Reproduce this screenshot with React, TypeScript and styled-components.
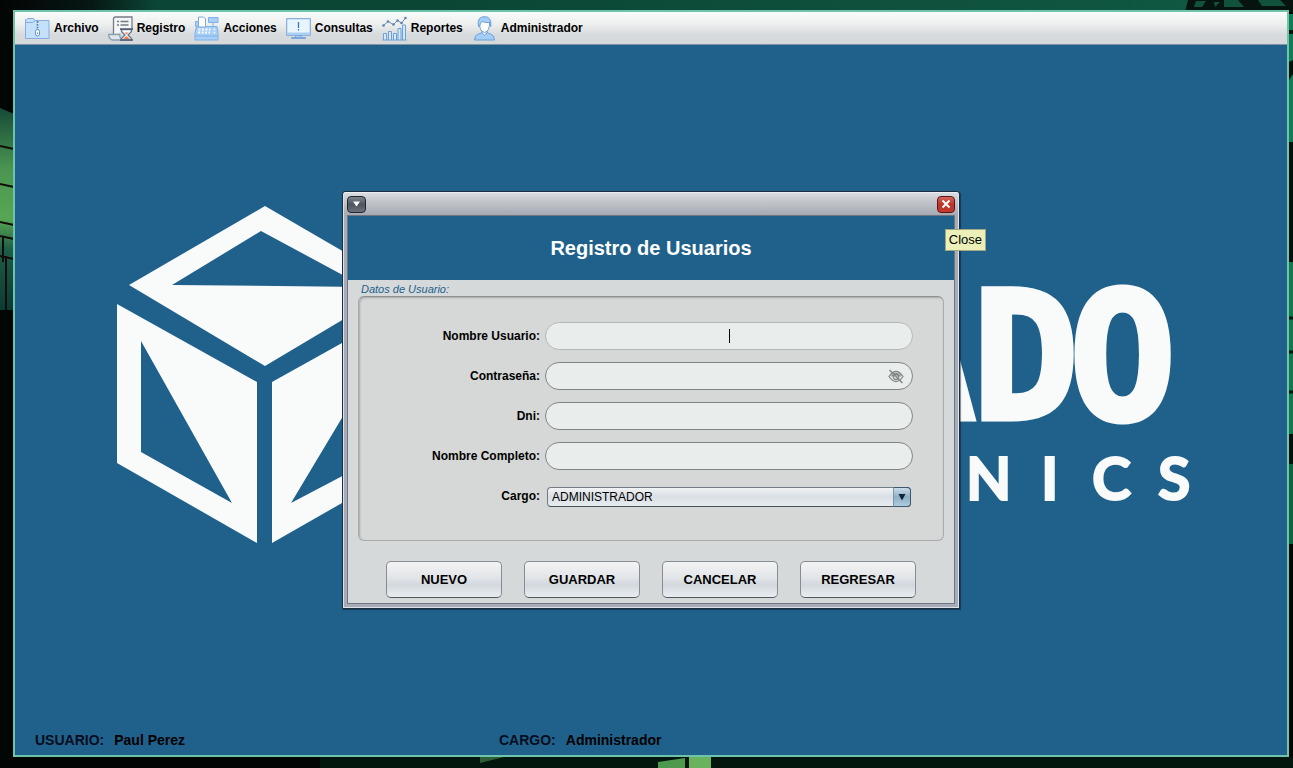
import React from "react";
import styled, { createGlobalStyle } from "styled-components";

const GlobalStyle = createGlobalStyle`
  *, *::before, *::after { box-sizing: border-box; }
  body {
    margin: 0;
    background: #020605;
    color: #000;
    font-family: "Liberation Sans", Arial, sans-serif;
    font-size: 12px;
  }
  button, input, select { font-family: inherit; }
`;

const Screen = styled.div`
  position: relative;
  display: flex;
  min-height: 100vh;
  padding: 10px 4px 11px 13px;
`;

const Wallpaper = styled.svg`
  position: absolute;
  inset: 0;
  width: 100%;
  height: 100%;
`;

const AppFrame = styled.div`
  position: relative;
  flex: 1;
  display: flex;
  flex-direction: column;
  border: 2px solid #6fc3ad;
  background: #20618c;
`;

const MenuBar = styled.nav`
  position: relative;
  display: flex;
  align-items: center;
  gap: 9px;
  height: 33px;
  padding: 0 10px;
  background: linear-gradient(#fafbfb 0%, #eceeee 40%, #d8dbde 70%, #d6d9da 100%);
  border-bottom: 1px solid #7f94a6;
`;

const MenuButton = styled.button`
  display: flex;
  align-items: center;
  gap: 4px;
  padding: 0;
  border: 0;
  background: none;
  color: #000;
  font-size: 12px;
  font-weight: 700;
  line-height: 16px;

  svg { width: 25px; height: 25px; }
`;

const Desktop = styled.main`
  position: relative;
  flex: 1;
  display: flex;
  flex-direction: column;
`;

const Brand = styled.svg`
  position: absolute;
  inset: 0;
  width: 100%;
  height: 100%;
`;

const Stage = styled.div`
  position: relative;
  flex: 1;
  display: flex;
  align-items: center;
  justify-content: center;
  padding-top: 30px;
`;

const StatusBar = styled.footer`
  position: relative;
  display: grid;
  grid-template-columns: 464px 1fr;
  height: 30px;
  padding: 6px 20px;
  font-size: 14px;
  font-weight: 700;
  line-height: 18px;
`;

const StatusItem = styled.div`
  display: flex;
  gap: 10px;
`;

const StatusLabel = styled.span`
  color: #050d1c;
`;

const Dialog = styled.section`
  position: relative;
  width: 618px;
  max-width: 100%;
  padding: 0 4px 4px;
  border: 1px solid #1c2e3e;
  border-radius: 3px 3px 0 0;
  background: #a7adb8;
  box-shadow: inset 1px 1px 0 #dfe3e8, inset -1px -1px 0 #dfe3e8, 1px 1px 1px rgba(0, 20, 40, 0.5);
`;

const TitleBar = styled.header`
  display: flex;
  align-items: center;
  justify-content: space-between;
  height: 23px;
  margin: 0 -3px;
  padding: 0 3px;
  border-radius: 2px 2px 0 0;
  background: linear-gradient(#d9dce0, #bfc3c9 45%, #a5aab3);
  border-top: 1px solid #eceef0;
`;

const WindowButton = styled.button<{ $danger?: boolean }>`
  display: flex;
  align-items: center;
  justify-content: center;
  width: ${(p) => (p.$danger ? 18 : 19)}px;
  height: 17px;
  padding: 0;
  border: 1px solid ${(p) => (p.$danger ? "#5d1512" : "#23262c")};
  border-radius: 4px;
  background: ${(p) =>
    p.$danger
      ? "linear-gradient(#d2665c, #bd3327 50%, #c23a2e)"
      : "linear-gradient(#7d838c, #4f555f 50%, #6b727d)"};
`;

const DialogBody = styled.div`
  border: 1px solid #70767f;
  background: #d6d9da;
  padding-bottom: 5px;
`;

const Banner = styled.h1`
  display: flex;
  align-items: center;
  justify-content: center;
  height: 64px;
  margin: 0;
  background: #20618c;
  color: #fff;
  font-size: 20px;
  font-weight: 700;
  line-height: 24px;
`;

const FieldGroup = styled.fieldset`
  min-width: 0;
  margin: 0 10px;
  padding: 0;
  border: 0;
`;

const Legend = styled.legend`
  padding: 3px 3px 0;
  color: #20618c;
  font-size: 11px;
  font-style: italic;
  line-height: 13px;
`;

const FieldPanel = styled.div`
  display: flex;
  flex-direction: column;
  gap: 12px;
  height: 245px;
  padding: 25px 30px 0 0;
  border: 1px solid #a9acad;
  border-top-color: #8c9091;
  border-radius: 6px;
  background: #d5d8d7;
  box-shadow: inset 1px 1px 2px rgba(0, 0, 0, 0.22);
`;

const FieldRow = styled.div`
  display: grid;
  grid-template-columns: 1fr 368px;
  align-items: center;
  gap: 5px;
  height: 28px;
`;

const FieldLabel = styled.label`
  text-align: right;
  font-size: 12px;
  font-weight: 700;
  line-height: 16px;
`;

const Control = styled.div`
  position: relative;
  display: flex;
  height: 28px;
`;

const TextInput = styled.input<{ $active?: boolean }>`
  width: 100%;
  padding: 0 32px;
  border: 1px solid ${(p) => (p.$active ? "#b4b8b7" : "#808585")};
  border-radius: 14px;
  background: #e9edec;
  color: #000;
  font-size: 12px;
  text-align: center;
  outline: 0;
`;

const Caret = styled.span`
  position: absolute;
  top: 7px;
  left: 50%;
  width: 1px;
  height: 14px;
  background: #000;
`;

const RevealButton = styled.button`
  position: absolute;
  top: 6px;
  right: 9px;
  width: 16px;
  height: 16px;
  padding: 0;
  border: 0;
  background: none;

  svg { display: block; }
`;

const SelectBox = styled.div`
  position: relative;
  display: flex;
  height: 20px;
  margin: 2px 2px 0;
`;

const Select = styled.select`
  appearance: none;
  width: 100%;
  padding: 0 24px 0 4px;
  border: 1px solid #747d85;
  border-bottom-color: #4a525a;
  border-radius: 4px;
  background: linear-gradient(#f1f3f4, #d9dfe4 48%, #e6ecf0);
  color: #000;
  font-size: 12px;
`;

const SelectArrow = styled.span`
  position: absolute;
  top: 0;
  right: 0;
  display: flex;
  align-items: center;
  justify-content: center;
  width: 18px;
  height: 20px;
  border: 1px solid #3d5870;
  border-left-color: #7b95aa;
  border-radius: 0 4px 4px 0;
  background: linear-gradient(#c9dbe8, #8fafc6 50%, #b0cbdd);
  pointer-events: none;
`;

const ButtonRow = styled.div`
  display: flex;
  justify-content: center;
  gap: 22px;
  margin-top: 20px;
`;

const ActionButton = styled.button`
  width: 116px;
  height: 37px;
  padding: 0;
  border: 1px solid #868c94;
  border-bottom-color: #50565e;
  border-radius: 5px;
  background: linear-gradient(#f2f3f4 0%, #e2e5e8 45%, #d3d8df 65%, #e8edf0 100%);
  color: #000;
  font-size: 13px;
  font-weight: 700;
`;

const Tooltip = styled.div`
  position: absolute;
  top: 37px;
  right: -27px;
  padding: 2px 3px;
  border: 1px solid #a3a684;
  background: #eaf0b8;
  font-size: 13px;
  line-height: 16px;
`;

const line = "#6f9fd6";
const fill = "#c3e1fb";

const FolderIcon = () => (
  <svg viewBox="0 0 25 25" fill={fill} stroke="#8aabdc" aria-hidden="true">
    <path d="M.5 3.500h1l1-1h6l1.500 2h14v18H.5z" />
    <path d="M.5 6.500h7l3-2" fill="none" />
    <path d="M11 5h3v9h-3z" fill="#eaf5ff" stroke="none" />
    <path d="M12.500 5v9" stroke="#5b84bd" strokeWidth="2" strokeDasharray="2 .7" />
    <rect x="10.500" y="13.500" width="4" height="6.500" rx="2" fill="#fff" stroke="#6b8fc4" />
    <path d="M12.500 16.500v1.500" stroke="#6b8fc4" />
  </svg>
);

const RecordIcon = () => (
  <svg viewBox="0 0 25 25" fill="none" stroke="#737c87" strokeWidth="1.300" aria-hidden="true">
    <path d="M5.500 18V3q0-2 2-2H24v13" fill="#f4f6f6" />
    <path d="M.7 18.500h11q0 4 3 5.500H4q-3.300-1.500-3.300-5.500z" fill="#dfe6ee" stroke="#8d9fae" />
    <path d="M9 5.500h2M9 9h2M12.500 5.500h8M12.500 9h8" />
    <path d="M13.500 13.500h10v2l-3.500 3.500 3.500 3.500v1.500h-10v-1.500l3.500-3.500-3.500-3.500z" fill="#fff" stroke="#64748f" />
    <path d="M12 13.200h13M12 24h13" stroke="#53617b" strokeWidth="1.700" />
    <path d="M15 23l3.500-3 3.500 3zM16.500 16.500h4l-2 2z" fill="#e97f4f" stroke="none" />
  </svg>
);

const RegisterIcon = () => (
  <svg viewBox="0 0 25 25" fill="#a8cff5" stroke="#7fb0e6" aria-hidden="true">
    <path d="M2.500 10.500h20.500l1 6v7.500H1v-7.500z" />
    <path d="M14.500 1.500h9.500v5h-9.500zM19 6.500v4" />
    <path d="M1.500 10.500v-5h4v5z" />
    <path d="M4.500 11V1h5l2 2v8z" fill="#fff" stroke="#83a9d8" />
    <path d="M4.500 13.500h12M4 16.500h12" stroke="#fff" strokeWidth="1.800" strokeDasharray="2 1.500" />
    <path d="M1 20h23" />
    <path d="M19.500 13.500h2M19.500 16.500h2" stroke="#e4f2ff" strokeWidth="1.500" />
  </svg>
);

const MonitorIcon = () => (
  <svg viewBox="0 0 25 25" fill="#a9cff6" stroke="#8fb2da" aria-hidden="true">
    <path d="M.5 2.500h24v17H.5z" />
    <path d="M1.500 3.500h22v13h-22z" fill="#e8f5ff" stroke="none" />
    <path d="M9.500 19.500h6v2.500h-6zM5.500 21.500h14v1h-14z" stroke="#78a6d8" />
    <path d="M12.500 6v6M12.500 13v1.500" stroke="#3e74b8" strokeWidth="1.300" />
  </svg>
);

const ChartIcon = () => (
  <svg viewBox="0 0 25 25" fill="#d3e9fc" stroke={line} aria-hidden="true">
    <path d="M1.500 24v-6.500h3V24M6.500 24v-8.500h3V24M11.500 24v-6.500h3V24M16 24V12.500h3V24M20.500 24V9h3v15M.5 24h24" />
    <path d="M1.500 9.500l4.500-4 5.500 3 4-4 4 2.500 4-5" fill="none" stroke="#6c8db8" />
    <g fill="#6482ad" stroke="none">
      <circle cx="1.500" cy="9.500" r="1.300" />
      <circle cx="6" cy="5.500" r="1.300" />
      <circle cx="11.500" cy="8.500" r="1.300" />
      <circle cx="15.500" cy="4.500" r="1.300" />
      <circle cx="19.500" cy="7" r="1.300" />
      <circle cx="23.500" cy="2" r="1.300" />
    </g>
  </svg>
);

const PersonIcon = () => (
  <svg viewBox="0 0 25 25" fill={fill} stroke={line} aria-hidden="true">
    <path d="M2.500 24q0-5 4-6l4-1.500h4l4 1.500q4 1 4 6z" fill="#a5cef6" />
    <path d="M10 14.500v2.500l2.500 2 2.500-2v-2.500" fill="#fff" />
    <path d="M7.500 5.500q-.5 10 5 11 5.500-1 5-11z" fill="#fff" />
    <path d="M6.500 10.500Q4.500 1 12 .7q8-.5 6.800 9.800l-1-4q-5.300.5-7.300-1-2.500 1-3 5z" fill="#a5cef6" />
  </svg>
);

const MENU = [
  { label: "Archivo", Icon: FolderIcon },
  { label: "Registro", Icon: RecordIcon },
  { label: "Acciones", Icon: RegisterIcon },
  { label: "Consultas", Icon: MonitorIcon },
  { label: "Reportes", Icon: ChartIcon },
  { label: "Administrador", Icon: PersonIcon },
];

const ACTIONS = ["NUEVO", "GUARDAR", "CANCELAR", "REGRESAR"];

const City = () => (
  <Wallpaper viewBox="0 0 1293 768" preserveAspectRatio="none" aria-hidden="true">
    <defs>
      <linearGradient id="sky" x1="0" x2="1" y1="0" y2="0">
        <stop offset="0" stopColor="#030505" />
        <stop offset=".07" stopColor="#071713" />
        <stop offset=".12" stopColor="#0b4535" />
        <stop offset=".3" stopColor="#0b4534" />
        <stop offset="1" stopColor="#105a43" />
      </linearGradient>
      <linearGradient id="lamp" x1="0" x2="0" y1="0" y2="1">
        <stop offset="0" stopColor="#174a36" />
        <stop offset=".3" stopColor="#4b9552" />
        <stop offset=".55" stopColor="#58a653" />
        <stop offset=".7" stopColor="#1e5d48" />
        <stop offset="1" stopColor="#0c3a32" />
      </linearGradient>
    </defs>
    <rect width="1293" height="768" fill="#020605" />
    <rect width="1293" height="12" fill="url(#sky)" />
    <path d="M1188 0h105v12h-108z" fill="#06140f" />
    <path d="M1196 1h10l-4 6h-8zM1214 2h6l-5 5zM1224 0h14l6 7h-20zM1258 0h22l6 6h-24z" fill="#10523c" />
    <path d="M0 108l14 6v196H0z" fill="url(#lamp)" />
    <path d="M0 146l14 3M0 184l14 3M0 222l14 3M0 236l14 3M0 256l14 3M3 236v26M6 256v54" stroke="#130d0a" strokeWidth="2" />
    <path d="M1289 14h4v128h-4z" fill="#127c56" />
    <path d="M1289 62l4-2v14l-4 6zM1289 30h4v4h-4z" fill="#02110c" />
    <path d="M1289 142h4v120h-4z" fill="#03100c" />
    <path d="M1289 262h4v172h-4z" fill="#12794f" />
    <path d="M1289 318h4M1289 352h4M1289 392h4" stroke="#04140e" strokeWidth="3" />
    <path d="M1289 434h4v30h-4z" fill="#03100c" />
    <path d="M1289 464h4v80h-4z" fill="#0d6443" />
    <path d="M320 757h973v11H320z" fill="#04170f" />
    <path d="M480 757h24l-24 6z" fill="#2d5e38" />
    <path d="M658 762l27-4v10h-27z" fill="#4d9a4f" />
    <path d="M689 757h22v11h-22z" fill="#68b35c" />
  </Wallpaper>
);

const BrandMark = () => (
  <Brand viewBox="15 45 1272 710" aria-hidden="true">
    <g fill="#f9fbfb" stroke="#f9fbfb" strokeWidth="0" fillRule="evenodd">
      <path d="M265 206L401 285 265 366 129 285zM261 231L172 285 365 287z" />
      <path d="M117 304L257 382V543L117 463zM141 341V452L232 503z" />
      <path d="M412 304L272 382V543L412 463zM388 341V452L291 503z" />
      <g fontFamily="'DejaVu Sans Mono', monospace" fontSize="178" fontWeight="700" strokeWidth="5">
        <text x="869 972 1069" y="419">ADO</text>
      </g>
      <g fontFamily="Lato, sans-serif" fontSize="59" fontWeight="700" strokeWidth="2">
        <text x="966 1041 1092 1158" y="500">NICS</text>
      </g>
    </g>
  </Brand>
);

export default function App() {
  return (
    <>
      <GlobalStyle />
      <Screen>
        <City />
        <AppFrame>
          <MenuBar aria-label="Principal">
            {MENU.map(({ label, Icon }) => (
              <MenuButton key={label} type="button">
                <Icon />
                {label}
              </MenuButton>
            ))}
          </MenuBar>
          <Desktop>
            <BrandMark />
            <Stage>
              <Dialog role="dialog" aria-labelledby="dialog-title">
                <TitleBar>
                  <WindowButton type="button" aria-label="Menu">
                    <svg width="9" height="6" viewBox="0 0 9 6" aria-hidden="true">
                      <path d="M1 .5h7l-3.500 5z" fill="#fff" />
                    </svg>
                  </WindowButton>
                  <WindowButton type="button" aria-label="Close" $danger>
                    <svg width="10" height="10" viewBox="0 0 10 10" aria-hidden="true">
                      <path d="M1.500 1.500l7 7M8.500 1.500l-7 7" stroke="#fff" strokeWidth="2" />
                    </svg>
                  </WindowButton>
                </TitleBar>
                <DialogBody>
                  <Banner id="dialog-title">Registro de Usuarios</Banner>
                  <form onSubmit={(e) => e.preventDefault()}>
                    <FieldGroup>
                      <Legend>Datos de Usuario:</Legend>
                      <FieldPanel>
                        <FieldRow>
                          <FieldLabel htmlFor="usuario">Nombre Usuario:</FieldLabel>
                          <Control>
                            <TextInput id="usuario" type="text" $active />
                            <Caret />
                          </Control>
                        </FieldRow>
                        <FieldRow>
                          <FieldLabel htmlFor="clave">Contraseña:</FieldLabel>
                          <Control>
                            <TextInput id="clave" type="password" />
                            <RevealButton type="button" aria-label="Mostrar contraseña">
                              <svg width="16" height="16" viewBox="0 0 16 16" fill="none" stroke="#858989" strokeWidth="1.300" aria-hidden="true">
                                <path d="M1 8.500Q8-1.500 15 8.500 8 18.500 1 8.500z" />
                                <path d="M3.500 8.500Q8 2.500 12.500 8.500" />
                                <circle cx="8" cy="9" r="2.500" />
                                <path d="M1.500 2l13 13" strokeWidth="1.600" />
                              </svg>
                            </RevealButton>
                          </Control>
                        </FieldRow>
                        <FieldRow>
                          <FieldLabel htmlFor="dni">Dni:</FieldLabel>
                          <Control>
                            <TextInput id="dni" type="text" />
                          </Control>
                        </FieldRow>
                        <FieldRow>
                          <FieldLabel htmlFor="nombre">Nombre Completo:</FieldLabel>
                          <Control>
                            <TextInput id="nombre" type="text" />
                          </Control>
                        </FieldRow>
                        <FieldRow>
                          <FieldLabel htmlFor="cargo">Cargo:</FieldLabel>
                          <SelectBox>
                            <Select id="cargo" defaultValue="ADMINISTRADOR">
                              <option>ADMINISTRADOR</option>
                            </Select>
                            <SelectArrow>
                              <svg width="8" height="8" viewBox="0 0 8 8" aria-hidden="true">
                                <path d="M.5 1h7L4 7.500z" fill="#0f2437" />
                              </svg>
                            </SelectArrow>
                          </SelectBox>
                        </FieldRow>
                      </FieldPanel>
                    </FieldGroup>
                    <ButtonRow>
                      {ACTIONS.map((label) => (
                        <ActionButton key={label} type="button">
                          {label}
                        </ActionButton>
                      ))}
                    </ButtonRow>
                  </form>
                </DialogBody>
                <Tooltip role="tooltip">Close</Tooltip>
              </Dialog>
            </Stage>
            <StatusBar>
              <StatusItem>
                <StatusLabel>USUARIO:</StatusLabel>
                <span>Paul Perez</span>
              </StatusItem>
              <StatusItem>
                <StatusLabel>CARGO:</StatusLabel>
                <span>Administrador</span>
              </StatusItem>
            </StatusBar>
          </Desktop>
        </AppFrame>
      </Screen>
    </>
  );
}
